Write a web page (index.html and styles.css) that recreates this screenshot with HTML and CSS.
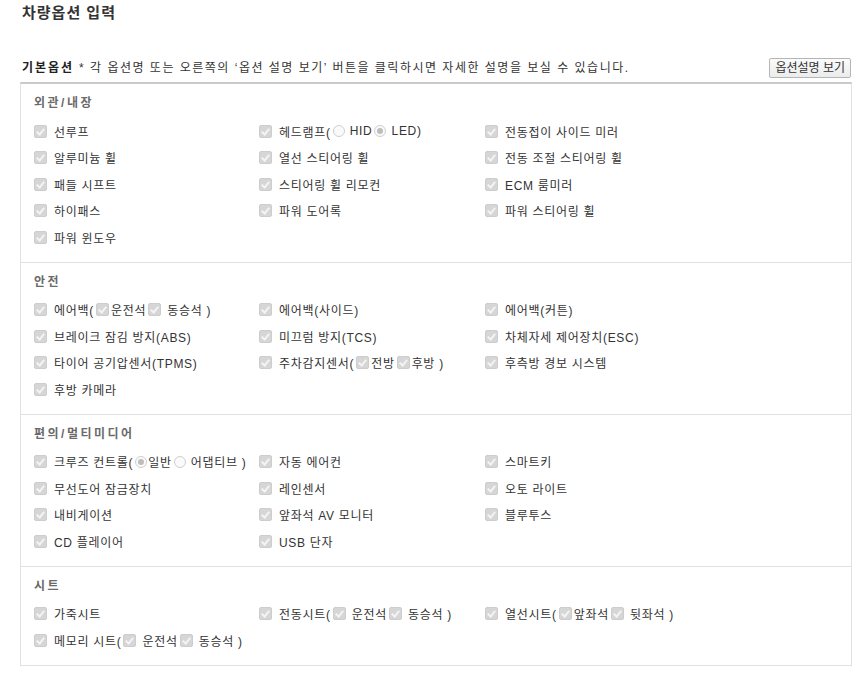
FILE: index.html
```html
<!DOCTYPE html>
<html lang="ko">
<head>
    <meta charset="UTF-8">
    <meta name="viewport" content="width=device-width, initial-scale=1.0">
    <title>차량옵션 입력</title>
    <link rel="stylesheet" href="styles.css">
</head>
<body>

<div class="page">
    <h1 class="page-title">차량옵션 입력</h1>

    <div class="opt-head">
        <p class="opt-desc"><strong>기본옵션</strong> * 각 옵션명 또는 오른쪽의 ‘옵션 설명 보기’ 버튼을 클릭하시면 자세한 설명을 보실 수 있습니다.</p>
        <button type="button" class="btn-desc">옵션설명 보기</button>
    </div>

    <div class="opt-box">
        <section class="opt-group">
            <h3>외관/내장</h3>
            <ul class="opt-list">
                <li><span class="cb"></span>선루프</li>
                <li><span class="cb"></span>헤드램프(<span class="rd"></span> HID<span class="rd on"></span> LED)</li>
                <li><span class="cb"></span>전동접이 사이드 미러</li>
                <li><span class="cb"></span>알루미늄 휠</li>
                <li><span class="cb"></span>열선 스티어링 휠</li>
                <li><span class="cb"></span>전동 조절 스티어링 휠</li>
                <li><span class="cb"></span>패들 시프트</li>
                <li><span class="cb"></span>스티어링 휠 리모컨</li>
                <li><span class="cb"></span>ECM 룸미러</li>
                <li><span class="cb"></span>하이패스</li>
                <li><span class="cb"></span>파워 도어록</li>
                <li><span class="cb"></span>파워 스티어링 휠</li>
                <li><span class="cb"></span>파워 윈도우</li>
            </ul>
        </section>

        <section class="opt-group">
            <h3>안전</h3>
            <ul class="opt-list">
                <li><span class="cb"></span>에어백(<span class="cb sub"></span>운전석<span class="cb sub"></span> 동승석 )</li>
                <li><span class="cb"></span>에어백(사이드)</li>
                <li><span class="cb"></span>에어백(커튼)</li>
                <li><span class="cb"></span>브레이크 잠김 방지(ABS)</li>
                <li><span class="cb"></span>미끄럼 방지(TCS)</li>
                <li><span class="cb"></span>차체자세 제어장치(ESC)</li>
                <li><span class="cb"></span>타이어 공기압센서(TPMS)</li>
                <li><span class="cb"></span>주차감지센서(<span class="cb sub"></span>전방<span class="cb sub"></span>후방 )</li>
                <li><span class="cb"></span>후측방 경보 시스템</li>
                <li><span class="cb"></span>후방 카메라</li>
            </ul>
        </section>

        <section class="opt-group">
            <h3>편의/멀티미디어</h3>
            <ul class="opt-list">
                <li><span class="cb"></span>크루즈 컨트롤(<span class="rd on"></span>일반<span class="rd"></span> 어댑티브 )</li>
                <li><span class="cb"></span>자동 에어컨</li>
                <li><span class="cb"></span>스마트키</li>
                <li><span class="cb"></span>무선도어 잠금장치</li>
                <li><span class="cb"></span>레인센서</li>
                <li><span class="cb"></span>오토 라이트</li>
                <li><span class="cb"></span>내비게이션</li>
                <li><span class="cb"></span>앞좌석 AV 모니터</li>
                <li><span class="cb"></span>블루투스</li>
                <li><span class="cb"></span>CD 플레이어</li>
                <li><span class="cb"></span>USB 단자</li>
            </ul>
        </section>

        <section class="opt-group">
            <h3>시트</h3>
            <ul class="opt-list">
                <li><span class="cb"></span>가죽시트</li>
                <li><span class="cb"></span>전동시트(<span class="cb sub"></span> 운전석<span class="cb sub"></span> 동승석 )</li>
                <li><span class="cb"></span>열선시트(<span class="cb sub"></span>앞좌석<span class="cb sub"></span> 뒷좌석 )</li>
                <li><span class="cb"></span>메모리 시트(<span class="cb sub"></span> 운전석<span class="cb sub"></span> 동승석 )</li>
            </ul>
        </section>
    </div>
</div>

</body>
</html>
```

FILE: styles.css
```css
/* Page base */
body {
    margin: 0;
    background: #fff;
    color: #333;
    font-family: "Liberation Sans", "Noto Sans CJK KR", sans-serif;
    font-size: 12px;
}

.page {
    padding: 4px 10px 0 20px;
}

.page-title {
    margin: 0 0 0 2px;
    font-size: 15px;
    line-height: 18px;
    font-weight: bold;
    letter-spacing: 1px;
    color: #333;
}

/* Heading line with description button */
.opt-head {
    display: flex;
    align-items: center;
    justify-content: space-between;
    height: 24px;
    margin-top: 34px;
    margin-bottom: 2px;
}

.opt-desc {
    margin: 0 0 0 2px;
    line-height: 18px;
    letter-spacing: 1.5px;
    white-space: nowrap;
    color: #333;
}

.opt-desc strong {
    color: #222;
    letter-spacing: 2px;
}

.btn-desc {
    height: 20px;
    padding: 0 5px;
    margin-right: 1px;
    border: 1px solid #b5b5b5;
    border-radius: 2px;
    background: linear-gradient(#fbfbfb, #ececec);
    color: #333;
    font-family: inherit;
    font-size: 12px;
    line-height: 18px;
}

/* Option box */
.opt-box {
    border-top: 2px solid #cacaca;
    border-left: 1px solid #e2e2e2;
    border-right: 1px solid #e2e2e2;
    border-bottom: 1px solid #e2e2e2;
}

.opt-group {
    padding: 10px 13px 11px;
    border-bottom: 1px solid #e2e2e2;
}

.opt-group:last-child {
    border-bottom: none;
}

.opt-group h3 {
    margin: 0;
    font-size: 12px;
    line-height: 18px;
    font-weight: bold;
    color: #6a6a6a;
    letter-spacing: 2.5px;
}

.opt-list {
    display: grid;
    grid-template-columns: 225px 226px 1fr;
    grid-auto-rows: 26.5px;
    margin: 6px 0 0;
    padding: 0;
    list-style: none;
}

.opt-list li {
    display: flex;
    align-items: center;
    white-space: pre;
    letter-spacing: 0.7px;
}

/* Disabled checked checkbox */
.cb {
    position: relative;
    flex: none;
    width: 13px;
    height: 13px;
    margin-right: 7px;
    box-sizing: border-box;
    border: 1px solid #cdcdcd;
    border-radius: 2px;
    background: #d6d6d6;
}

.cb::after {
    content: "";
    position: absolute;
    left: 3px;
    top: 1px;
    width: 3px;
    height: 6px;
    border-right: 2px solid #f4f4f4;
    border-bottom: 2px solid #f4f4f4;
    transform: rotate(40deg);
}

.cb.sub {
    margin: 0 2px 0 2px;
}

/* Radio */
.rd {
    position: relative;
    flex: none;
    width: 12px;
    height: 12px;
    margin: 0 1px 0 2px;
    box-sizing: border-box;
    border: 1px solid #cfcfcf;
    border-radius: 50%;
    background: #fafafa;
}

.rd.on::after {
    content: "";
    position: absolute;
    left: 2px;
    top: 2px;
    width: 6px;
    height: 6px;
    border-radius: 50%;
    background: #bdbdbd;
}
```
